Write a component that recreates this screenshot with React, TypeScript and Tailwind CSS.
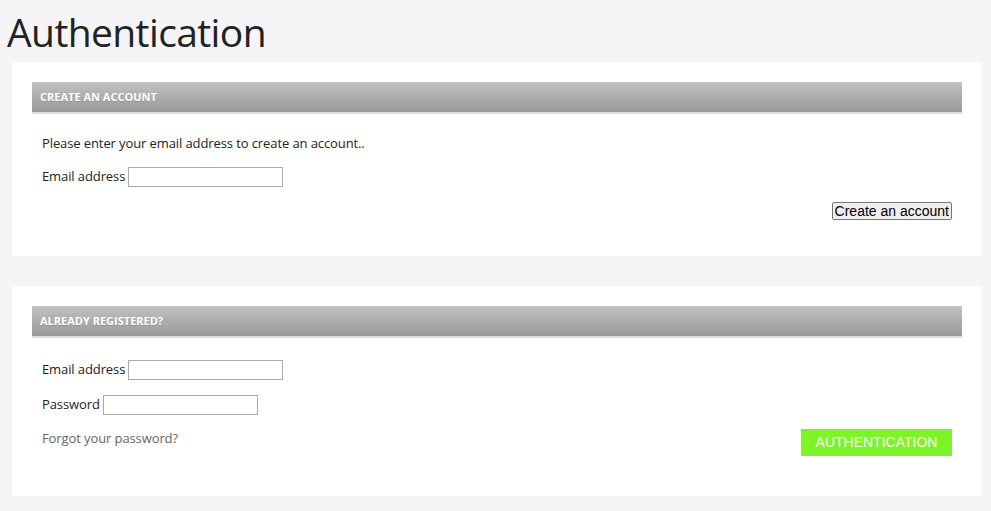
import React from 'react';

const SectionHeader = ({ title }: { title: string }) => (
  <div className="h-[32px] flex items-center px-[8px] bg-gradient-to-b from-[#c2c2c2] to-[#999999] border-b-2 border-[#dcdcdc]">
    <h3 className="text-[11px] font-bold text-white uppercase [text-shadow:0_1px_0_rgba(0,0,0,0.15)]">{title}</h3>
  </div>
);

const Field = ({ label, type = 'text' }: { label: string; type?: string }) => (
  <div className="flex items-center h-[20px]">
    <label className="text-[13px] text-[#222] mr-[3px] tracking-[-0.1px]">{label}</label>
    <input type={type} className="w-[155px] h-[20px] border border-[#a9a9a9] bg-white outline-none" />
  </div>
);

export default function App() {
  return (
    <div className="min-h-[511px] bg-[#f5f5f7] pb-[15px]" style={{ fontFamily: '"Open Sans", "Noto Sans", sans-serif' }}>
      <h1 className="text-[39px] leading-[48px] text-[#222] pl-[7px] pt-[8px] tracking-[-0.6px]" style={{ fontFamily: '"Open Sans", sans-serif' }}>
        Authentication
      </h1>

      {/* Create an account */}
      <div className="ml-[12px] mr-[9px] mt-[6px] bg-white px-[20px] pt-[20px] pb-[36px]">
        <SectionHeader title="Create an account" />
        <div className="px-[10px] pt-[19px]">
          <p className="text-[13px] text-[#222] leading-[20px] tracking-[-0.1px]">Please enter your email address to create an account..</p>
          <div className="mt-[14px]">
            <Field label="Email address" />
          </div>
          <div className="flex justify-end mt-[15px]">
            <button
              className="h-[18px] px-[2px] text-[14px] leading-[14px] text-black bg-[#efefef] border border-[#767676] rounded-[2px]"
              style={{ fontFamily: '"Liberation Sans", Arial, sans-serif' }}
            >
              Create an account
            </button>
          </div>
        </div>
      </div>

      {/* Already registered */}
      <div className="ml-[12px] mr-[9px] mt-[30px] bg-white px-[20px] pt-[20px] pb-[40px]">
        <SectionHeader title="Already registered?" />
        <div className="px-[10px] pt-[22px]">
          <Field label="Email address" />
          <div className="mt-[15px]">
            <Field label="Password" type="password" />
          </div>
          <div className="flex justify-between items-start mt-[14px]">
            <a href="#" className="text-[13px] text-[#666] tracking-[-0.1px]">Forgot your password?</a>
            <button
              className="w-[151px] h-[27px] bg-[#7cf425] text-white text-[14px] uppercase"
              style={{ fontFamily: '"Liberation Sans", Arial, sans-serif' }}
            >
              Authentication
            </button>
          </div>
        </div>
      </div>
    </div>
  );
}
